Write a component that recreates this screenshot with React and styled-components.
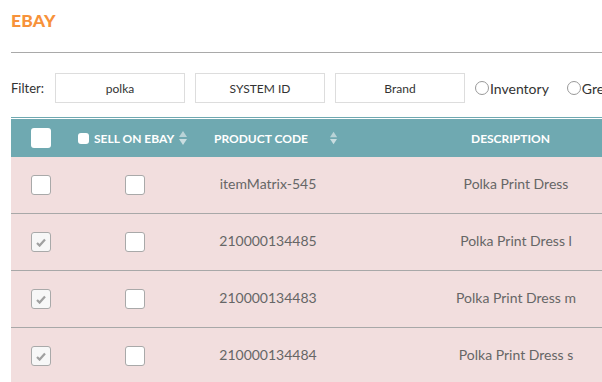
import React from "react";
import styled, { createGlobalStyle } from "styled-components";

const GlobalStyle = createGlobalStyle`
  body {
    margin: 0;
    font-family: Lato, "Open Sans", Arial, sans-serif;
    background: #fff;
    overflow: hidden;
  }
`;

const Page = styled.div`
  width: 602px;
  height: 382px;
  overflow: hidden;
  padding-left: 11px;
  box-sizing: border-box;
`;

const Title = styled.h1`
  margin: 0;
  padding-top: 11px;
  height: 20px;
  line-height: 20px;
  font-size: 17.5px;
  font-weight: 900;
  color: #f7923a;
  letter-spacing: 0.2px;
`;

const Rule = styled.div`
  margin-top: 21px;
  width: 700px;
  height: 1px;
  background: #a9a9a9;
`;

const FilterRow = styled.div`
  display: flex;
  align-items: center;
  margin-top: 20px;
  height: 30px;
  width: 700px;
  white-space: nowrap;
`;

const FilterLabel = styled.span`
  flex-shrink: 0;
  font-size: 13px;
  color: #333;
  width: 44px;
`;

const FilterInput = styled.div`
  flex-shrink: 0;
  box-sizing: border-box;
  width: 130px;
  height: 30px;
  margin-right: 10px;
  border: 1px solid #ddd;
  display: flex;
  align-items: center;
  justify-content: center;
  font-size: 12px;
  color: #333;
`;

const Radio = styled.label`
  flex-shrink: 0;
  display: flex;
  align-items: center;
  font-size: 14px;
  color: #333;
  margin-right: 18px;
  &::before {
    content: "";
    width: 14px;
    height: 14px;
    border: 1px solid #999;
    border-radius: 50%;
    margin-right: 1px;
    box-sizing: border-box;
  }
`;

const Table = styled.div`
  margin-top: 14px;
  width: 700px;
  border-top: 1px solid #6fa9b1;
  padding-top: 1px;
`;

const cols = "60px 128px 138px 358px";

const HeadRow = styled.div`
  display: grid;
  grid-template-columns: ${cols};
  height: 38px;
  background: #6fa9b1;
  align-items: center;
`;

const HeadCell = styled.div`
  display: flex;
  align-items: center;
  padding-left: ${(p) => p.$pl || 0}px;
  gap: 5px;
  color: #fff;
  font-size: 12px;
  font-weight: 700;
  white-space: nowrap;
`;

const Row = styled.div`
  display: grid;
  grid-template-columns: ${cols};
  height: 56px;
  align-items: center;
  background: #f2dede;
  border-bottom: 1px solid #a8a8a8;
`;

const Cell = styled.div`
  display: flex;
  justify-content: ${(p) => (p.$pl ? "flex-start" : "center")};
  padding-left: ${(p) => p.$pl || 0}px;
  align-items: center;
  font-size: 14px;
  color: #666;
  padding-bottom: ${(p) => (p.$text ? 3 : 0)}px;
  white-space: nowrap;
`;

const Box = styled.div`
  box-sizing: border-box;
  width: ${(p) => p.$size || 20}px;
  height: ${(p) => p.$size || 20}px;
  border-radius: 3px;
  background: ${(p) => (p.$checked ? "#f7f7f7" : "#fff")};
  border: ${(p) => (p.$head ? "none" : "1px solid #a9a9a9")};
  display: flex;
  align-items: center;
  justify-content: center;
  flex-shrink: 0;
`;

const SortArrows = () => (
  <svg width="8" height="15" viewBox="0 0 8 15">
    <path d="M4 0 L8 6 L0 6 Z" fill="#b9d3d7" />
    <path d="M0 8 L8 8 L4 14 Z" fill="#c9dde0" />
  </svg>
);

const Check = () => (
  <svg width="10" height="9" viewBox="0 0 10 9">
    <path d="M1 5 L3.6 7.6 L9 1.5" fill="none" stroke="#a0a0a0" strokeWidth="2.2" />
  </svg>
);

const rows = [
  { checked: false, code: "itemMatrix-545", desc: "Polka Print Dress" },
  { checked: true, code: "210000134485", desc: "Polka Print Dress l" },
  { checked: true, code: "210000134483", desc: "Polka Print Dress m" },
  { checked: true, code: "210000134484", desc: "Polka Print Dress s" },
];

export default function App() {
  return (
    <>
      <GlobalStyle />
      <Page>
        <Title>EBAY</Title>
        <Rule />
        <FilterRow>
          <FilterLabel>Filter:</FilterLabel>
          <FilterInput>polka</FilterInput>
          <FilterInput>SYSTEM ID</FilterInput>
          <FilterInput>Brand</FilterInput>
          <Radio>Inventory</Radio>
          <Radio>Green</Radio>
        </FilterRow>
        <Table>
          <HeadRow>
            <HeadCell $pl={20}>
              <Box $head />
            </HeadCell>
            <HeadCell $pl={7}>
              <Box $head $size={11} />
              <span>SELL ON EBAY</span>
              <SortArrows />
            </HeadCell>
            <HeadCell $pl={15}>
              <span style={{ marginRight: 17 }}>PRODUCT CODE</span>
              <SortArrows />
            </HeadCell>
            <HeadCell $pl={134}>DESCRIPTION</HeadCell>
          </HeadRow>
          {rows.map((r) => (
            <Row key={r.code}>
              <Cell>
                <Box $checked={r.checked}>{r.checked && <Check />}</Box>
              </Cell>
              <Cell $pl={54}>
                <Box />
              </Cell>
              <Cell $text>{r.code}</Cell>
              <Cell $text>{r.desc}</Cell>
            </Row>
          ))}
        </Table>
      </Page>
    </>
  );
}
